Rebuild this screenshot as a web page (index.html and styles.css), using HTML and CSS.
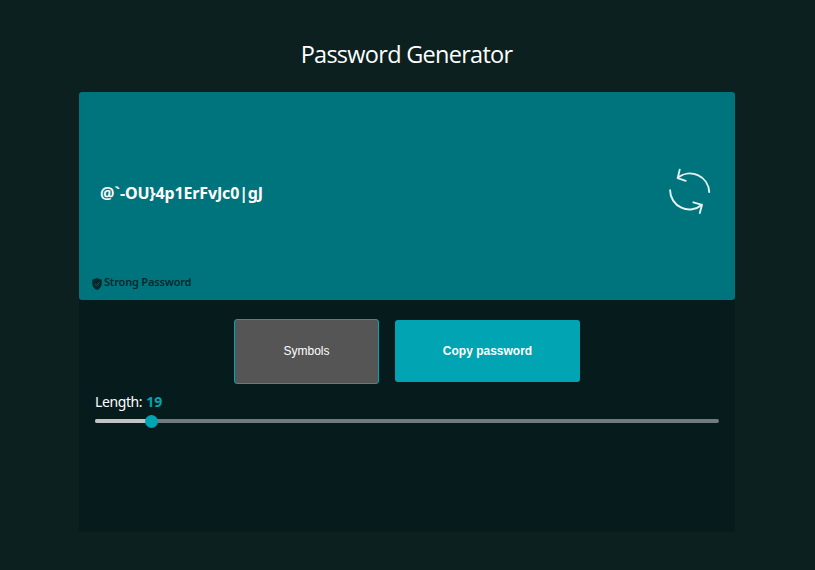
FILE: index.html
```html
<!DOCTYPE html>
<html lang="en">
<head>
<meta charset="utf-8">
<title>Password Generator</title>
<link rel="stylesheet" href="styles.css">
</head>
<body>
<h1 class="title">Password Generator</h1>
<main class="panel">
  <section class="display">
    <div class="row">
      <span class="password">@`-OU}4p1ErFvJc0|gJ</span>
      <svg class="refresh" viewBox="0 0 42 46" width="42" height="46" fill="none" stroke="#e6f1f2" stroke-width="1.9" stroke-linecap="round" stroke-linejoin="round">
        <path d="M40.2 24A19.300 19.300 0 0 0 8.700 9.800M10.700 1.600L8.700 10.200L16.700 12.800M1.100 22.200A19.300 19.300 0 0 0 33 36.800M24.400 34.300L33 36.800L30.800 45"/>
      </svg>
    </div>
    <div class="strength">
      <svg class="shield" viewBox="0 0 10 12" width="10" height="12">
        <path fill="#04292d" d="M5 0L9.700 1.700V5.500C9.700 8.600 7.800 10.900 5 12C2.200 10.900.3 8.600.3 5.500V1.700Z"/>
        <path fill="none" stroke="#00646b" stroke-width="1" d="M2.600 6.100L4.300 7.700L7.500 4.500"/>
      </svg>
      <span class="strength-text">Strong Password</span>
    </div>
  </section>
  <div class="buttons">
    <button class="symbols">Symbols</button>
    <button class="copy">Copy password</button>
  </div>
  <div class="length">
    <div class="label"><span class="label-text">Length:</span><b class="value">19</b></div>
    <div class="track"><div class="fill"></div><div class="thumb"></div></div>
  </div>
</main>
</body>
</html>
```

FILE: styles.css
```css
* { box-sizing: border-box; }
body {
  margin: 0;
  height: 570px;
  overflow: hidden;
  background: #0c211f;
  color: #fff;
  font-family: "Noto Sans", sans-serif;
}
.title {
  margin: 0;
  padding: 37px 2px 0 0;
  height: 92px;
  font-family: "Open Sans", sans-serif;
  font-size: 23.5px;
  font-weight: 400;
  letter-spacing: -0.72px;
  line-height: 35px;
  text-align: center;
}
.panel {
  width: 656px;
  height: 440px;
  margin-left: 79px;
  background: #051b1c;
}
.display {
  display: flex;
  flex-direction: column;
  height: 208px;
  padding: 76px 24px 0 21px;
  background: #00747c;
  border-radius: 3px;
}
.row {
  display: flex;
  justify-content: space-between;
  align-items: center;
  height: 46px;
}
.password {
  font-size: 16px;
  font-weight: 700;
  letter-spacing: -0.15px;
  line-height: 24px;
  padding-top: 4px;
}
.strength {
  display: flex;
  align-items: center;
  gap: 2px;
  height: 16px;
  margin: 60px 0 0 -8px;
}
.shield { margin-top: 4px; }
.strength-text {
  color: #04292d;
  font-size: 11px;
  font-weight: 600;
  letter-spacing: -0.18px;
  line-height: 16px;
}
.buttons {
  display: flex;
  justify-content: center;
  align-items: center;
  gap: 16px;
  height: 65px;
  margin-top: 19px;
}
button {
  padding: 0;
  color: #fff;
  font-family: "Liberation Sans", sans-serif;
  font-size: 12px;
  border-radius: 3px;
}
.symbols {
  width: 145px;
  height: 65px;
  padding-bottom: 2px;
  background: #555;
  border: 1px solid #00a4b2;
}
.copy {
  width: 185px;
  height: 62px;
  margin-top: -1px;
  background: #00a4b2;
  border: 0;
  font-weight: 700;
}
.length { padding: 8px 16px 0; }
.label {
  display: flex;
  gap: 4px;
  height: 20px;
  font-size: 14px;
  line-height: 20px;
}
.label-text { letter-spacing: -0.4px; }
.value { color: #00a4b2; }
.track {
  display: flex;
  align-items: center;
  height: 4px;
  margin-top: 7px;
  background: #707b7b;
  border-radius: 2px;
}
.fill {
  width: 52px;
  height: 4px;
  background: #c0c4c5;
  border-radius: 2px 0 0 2px;
}
.thumb {
  width: 13px;
  height: 13px;
  margin-left: -2px;
  background: #00a4b2;
  border-radius: 50%;
}
```
